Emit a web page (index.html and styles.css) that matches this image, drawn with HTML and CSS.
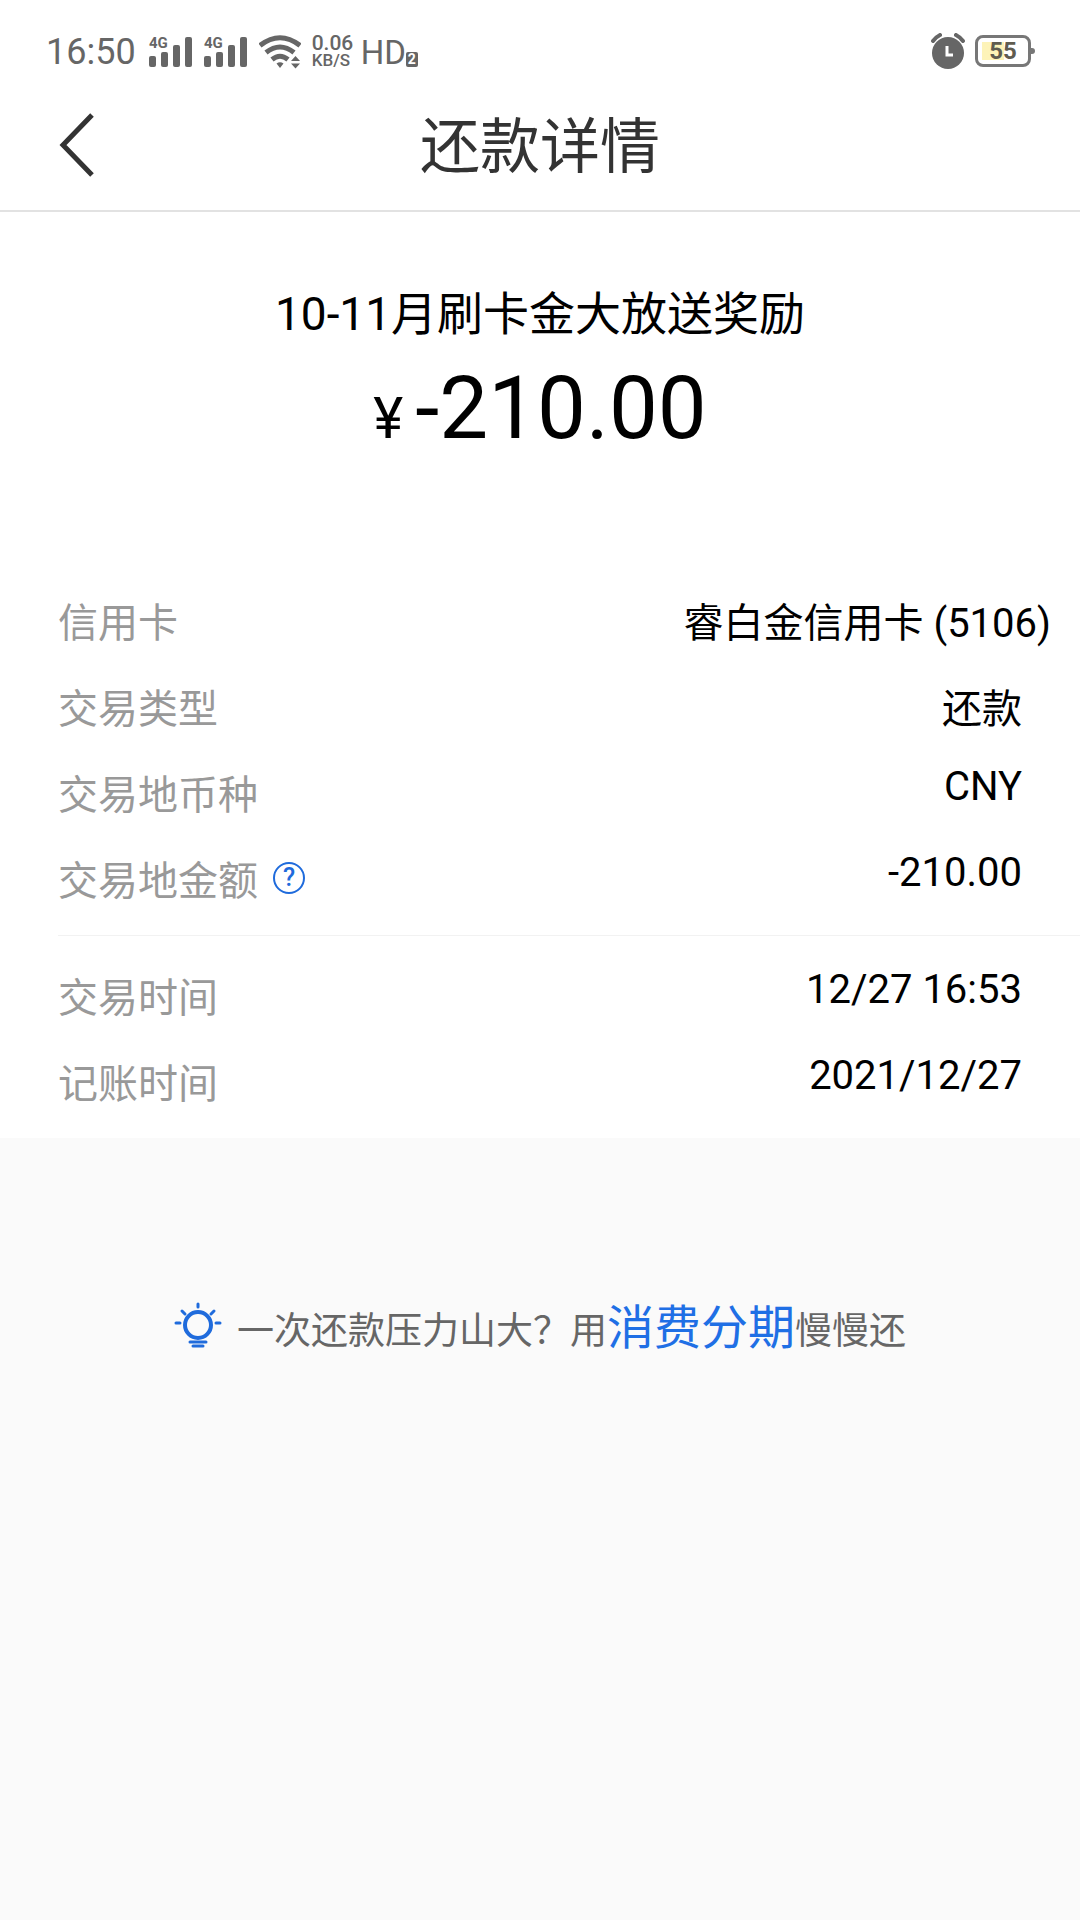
FILE: index.html
```html
<!DOCTYPE html>
<html lang="zh-CN">

<head>
    <meta charset="UTF-8">
    <meta name="viewport" content="width=device-width, initial-scale=1.0">
    <title>还款详情</title>
    <link rel="stylesheet" href="styles.css">
</head>

<body>

    <!-- Status bar -->
    <div class="status-bar">
        <div class="status-left">
            <span class="time">16:50</span>
            <svg class="signal" width="44" height="32" viewBox="0 0 44 32">
                <text x="0" y="12">4G</text>
                <rect x="0" y="20" width="7" height="11" rx="2"/>
                <rect x="12" y="16" width="7" height="15" rx="2"/>
                <rect x="24" y="9" width="7" height="22" rx="2"/>
                <rect x="36" y="1" width="7" height="30" rx="2"/>
            </svg>
            <svg class="signal" width="44" height="32" viewBox="0 0 44 32">
                <text x="0" y="12">4G</text>
                <rect x="0" y="20" width="7" height="11" rx="2"/>
                <rect x="12" y="16" width="7" height="15" rx="2"/>
                <rect x="24" y="9" width="7" height="22" rx="2"/>
                <rect x="36" y="1" width="7" height="30" rx="2"/>
            </svg>
            <svg class="wifi" width="42" height="34" viewBox="0 0 42 34">
                <g fill="none" stroke="#666" stroke-width="5">
                    <path d="M1 10.500Q21-5 41 10.500"/>
                    <path d="M7 17.500Q21 6.500 35 17.500"/>
                    <path d="M13 24.500Q21 18 29 24.500"/>
                </g>
                <path fill="#666" d="M17.500 28.500Q21 26 24.500 28.500L21 33ZM32 26l4.500-5 4.500 5ZM32 28.500h9L36.500 33.500Z"/>
            </svg>
            <span class="speed"><b>0.06</b><small>KB/S</small></span>
            <span class="hd">HD<i>2</i></span>
        </div>
        <div class="status-right">
            <svg width="36" height="37" viewBox="0 0 36 37">
                <circle cx="18" cy="20" r="16" fill="#666"/>
                <path fill="none" stroke="#666" stroke-width="4" stroke-linecap="round" d="M3 8q3-4 7-6M33 8q-3-4-7-6"/>
                <path fill="none" stroke="#fff" stroke-width="3" d="M17 13v9h6"/>
            </svg>
            <span class="battery">55</span>
        </div>
    </div>

    <!-- Title bar -->
    <header class="nav-bar">
        <button class="back" type="button" aria-label="返回">
            <svg width="36" height="64" viewBox="0 0 36 64">
                <path fill="none" stroke="#333" stroke-width="5" d="M33 2L4 32l29 30"/>
            </svg>
        </button>
        <h1>还款详情</h1>
    </header>

    <main class="detail">
        <section class="summary">
            <h2>10-11月刷卡金大放送奖励</h2>
            <p class="amount"><span class="currency">¥</span>-210.00</p>
        </section>

        <dl class="info">
            <div class="row row-card">
                <dt>信用卡</dt>
                <dd>睿白金信用卡 (5106)</dd>
            </div>
            <div class="row">
                <dt>交易类型</dt>
                <dd>还款</dd>
            </div>
            <div class="row">
                <dt>交易地币种</dt>
                <dd>CNY</dd>
            </div>
            <div class="row">
                <dt>交易地金额
                    <button class="help" type="button" aria-label="说明">?</button>
                </dt>
                <dd>-210.00</dd>
            </div>
        </dl>

        <dl class="info info-time">
            <div class="row">
                <dt>交易时间</dt>
                <dd>12/27 16:53</dd>
            </div>
            <div class="row">
                <dt>记账时间</dt>
                <dd>2021/12/27</dd>
            </div>
        </dl>
    </main>

    <!-- Instalment tip -->
    <div class="tip">
        <svg width="48" height="48" viewBox="0 0 48 48">
            <g fill="none" stroke="#1f6bdc" stroke-width="4">
                <circle cx="24" cy="25" r="13"/>
                <path stroke-linecap="round" stroke-width="3" d="M24 4v3M8 11l3 3M40 11l-3 3M2 23h4M42 23h4"/>
                <path stroke-linecap="round" stroke-width="3" d="M16 42h16M19 46h10"/>
            </g>
        </svg>
        <p>一次还款压力山大？用<a href="#">消费分期</a>慢慢还</p>
    </div>

</body>

</html>
```

FILE: styles.css
```css
* {
    box-sizing: border-box;
}

body {
    margin: 0;
    background-color: #fafafa;
    color: #000;
    font-family: Roboto, "Noto Sans CJK SC", sans-serif;
}

h1,
h2,
p,
dl,
dd {
    margin: 0;
    font-weight: 400;
}

svg {
    display: block;
    flex: none;
}

button {
    padding: 0;
    border: none;
    background: none;
    cursor: pointer;
}

/* status bar */
.status-bar {
    display: flex;
    justify-content: space-between;
    height: 78px;
    padding: 27px 49px 0 46px;
    background-color: #fff;
    color: #666;
}

.status-left,
.status-right {
    display: flex;
    align-items: center;
    height: 50px;
}

.time {
    margin-right: 13px;
    font-size: 36px;
    line-height: 50px;
}

.signal {
    margin-right: 11px;
    overflow: visible;
    fill: #666;
    font-size: 15px;
    font-weight: 700;
}

.wifi {
    margin-right: 11px;
}

.speed {
    display: flex;
    flex-direction: column;
    width: 42px;
    margin-right: 7px;
    line-height: 17px;
}

.speed b {
    font-size: 21px;
    font-weight: 500;
}

.speed small {
    font-size: 17px;
    font-weight: 500;
}

.hd {
    display: flex;
    align-items: baseline;
    font-size: 33px;
}

.hd i {
    width: 12px;
    border-radius: 2px;
    background-color: #666;
    color: #fff;
    font-size: 14px;
    font-style: normal;
    font-weight: 700;
    line-height: 15px;
    text-align: center;
}

.status-right {
    gap: 9px;
    height: 48px;
}

.battery {
    position: relative;
    width: 56px;
    height: 32px;
    border: 3px solid #777;
    border-radius: 8px;
    background: linear-gradient(#fdf3b8, #fdf3b8) 4px 4px / 22px 18px no-repeat;
    color: #5f5c50;
    font-size: 24px;
    font-weight: 700;
    line-height: 26px;
    text-align: center;
}

.battery::after {
    content: "";
    position: absolute;
    top: 10px;
    right: -7px;
    width: 4px;
    height: 6px;
    border-radius: 0 3px 3px 0;
    background-color: #777;
}

/* title bar */
.nav-bar {
    display: grid;
    grid-template-columns: 1fr auto 1fr;
    align-items: center;
    height: 134px;
    padding: 0 59px 6px;
    border-bottom: 2px solid #e2e2e2;
    background-color: #fff;
}

.back {
    justify-self: start;
    padding-top: 8px;
}

.nav-bar h1 {
    color: #333;
    font-size: 60px;
}

/* transaction */
.detail {
    background-color: #fff;
}

.summary {
    padding: 65px 59px 132px;
    text-align: center;
}

.summary h2 {
    margin-bottom: 14px;
    font-size: 46px;
}

.amount {
    font-size: 87px;
}

.currency {
    margin-right: 12px;
    font-size: 57px;
}

.info {
    display: flex;
    flex-direction: column;
    gap: 28px;
    margin-left: 58px;
    padding-bottom: 28px;
    font-size: 40px;
}

.info-time {
    padding-top: 30px;
    border-top: 1px solid #f2f2f2;
}

.row {
    display: flex;
    align-items: flex-start;
    justify-content: space-between;
    padding-right: 58px;
}

.row-card {
    padding-right: 29px;
}

.row dt {
    display: flex;
    align-items: center;
    gap: 15px;
    color: #999;
}

.help {
    width: 32px;
    height: 32px;
    border: 2px solid #1f6bdc;
    border-radius: 50%;
    color: #1f6bdc;
    font-family: inherit;
    font-size: 25px;
    font-weight: 500;
    line-height: 28px;
}

/* tip */
.tip {
    display: flex;
    align-items: center;
    justify-content: center;
    gap: 15px;
    padding: 151px 20px;
    color: #666;
    font-size: 37px;
}

.tip a {
    color: #1f6fe5;
    font-size: 47px;
    text-decoration: none;
}
```
